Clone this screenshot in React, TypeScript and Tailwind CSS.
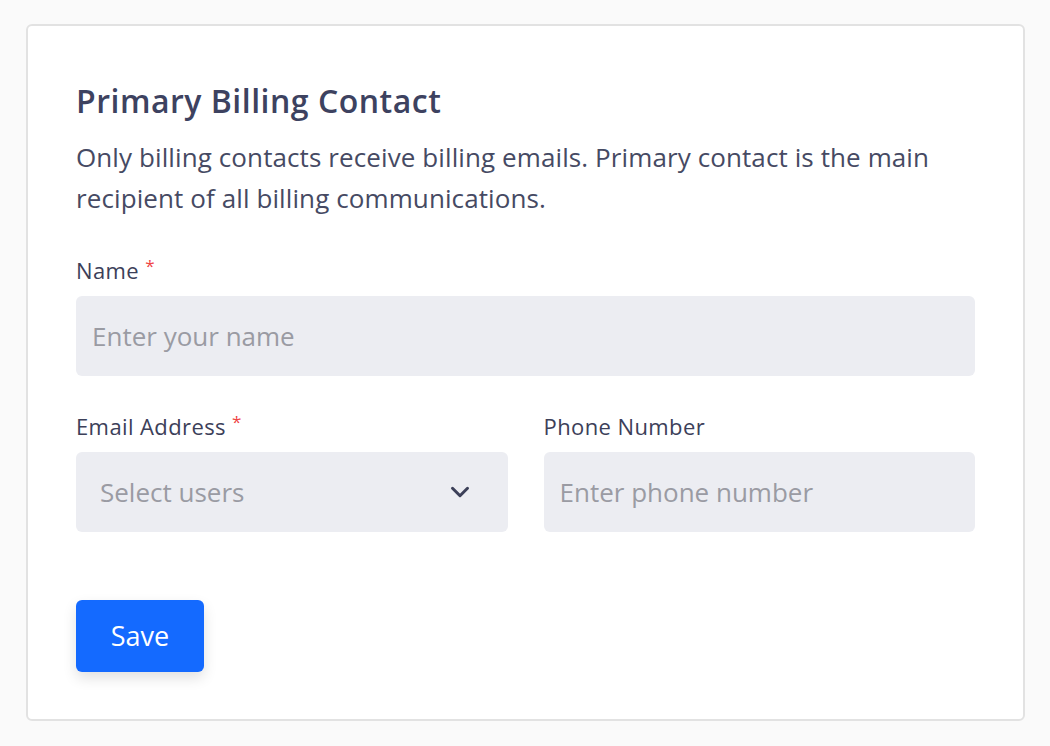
import React from 'react'
import { ChevronDown } from 'lucide-react'

const FONT = { fontFamily: '"Open Sans", "Noto Sans", sans-serif' }

const Label = ({ text, required }: { text: string; required?: boolean }) => (
  <label className="flex items-start gap-[6px] text-[22px] leading-[28px] font-medium tracking-[0.4px] text-[#3c4059]">
    {text}
    {required && <span className="text-[17px] leading-[20px] text-[#ef4444]">*</span>}
  </label>
)

const inputCls =
  'h-[80px] w-full rounded-[6px] bg-[#ecedf2] px-[16px] text-[26px] text-[#3c4059] outline-none placeholder:text-[#9a9ba3]'

export default function App() {
  return (
    <div className="min-h-screen bg-[#fafafa] pt-[24px] pl-[26px]" style={FONT}>
      <div className="w-[999px] rounded-[6px] border-2 border-[#e2e2e2] bg-white px-[48px] pt-[57px] pb-[47px]">
        <h2 className="text-[32px] leading-[36px] font-semibold tracking-[0.5px] text-[#3d4260]">
          Primary Billing Contact
        </h2>
        <p className="mt-[18px] text-[26px] leading-[41px] tracking-[0.1px] text-[#464a63]">
          Only billing contacts receive billing emails. Primary contact is the main recipient of all billing
          communications.
        </p>

        <div className="mt-[37px] flex flex-col gap-[12px]">
          <Label text="Name" required />
          <input placeholder="Enter your name" className={inputCls} />
        </div>

        <div className="mt-[36px] grid grid-cols-2 gap-[36px]">
          <div className="flex flex-col gap-[12px]">
            <Label text="Email Address" required />
            <div className="flex h-[80px] items-center justify-between rounded-[6px] bg-[#ecedf2] pl-[24px] pr-[33px]">
              <span className="text-[26px] text-[#9a9ba3]">Select users</span>
              <ChevronDown className="size-[30px] text-[#3c4059]" strokeWidth={2.4} />
            </div>
          </div>
          <div className="flex flex-col gap-[12px]">
            <Label text="Phone Number" />
            <input placeholder="Enter phone number" className={inputCls} />
          </div>
        </div>

        <button className="mt-[68px] h-[72px] w-[128px] rounded-[6px] bg-[#146aff] text-[27px] text-white shadow-[0_6px_14px_rgba(0,0,0,0.12)]">
          Save
        </button>
      </div>
    </div>
  )
}
